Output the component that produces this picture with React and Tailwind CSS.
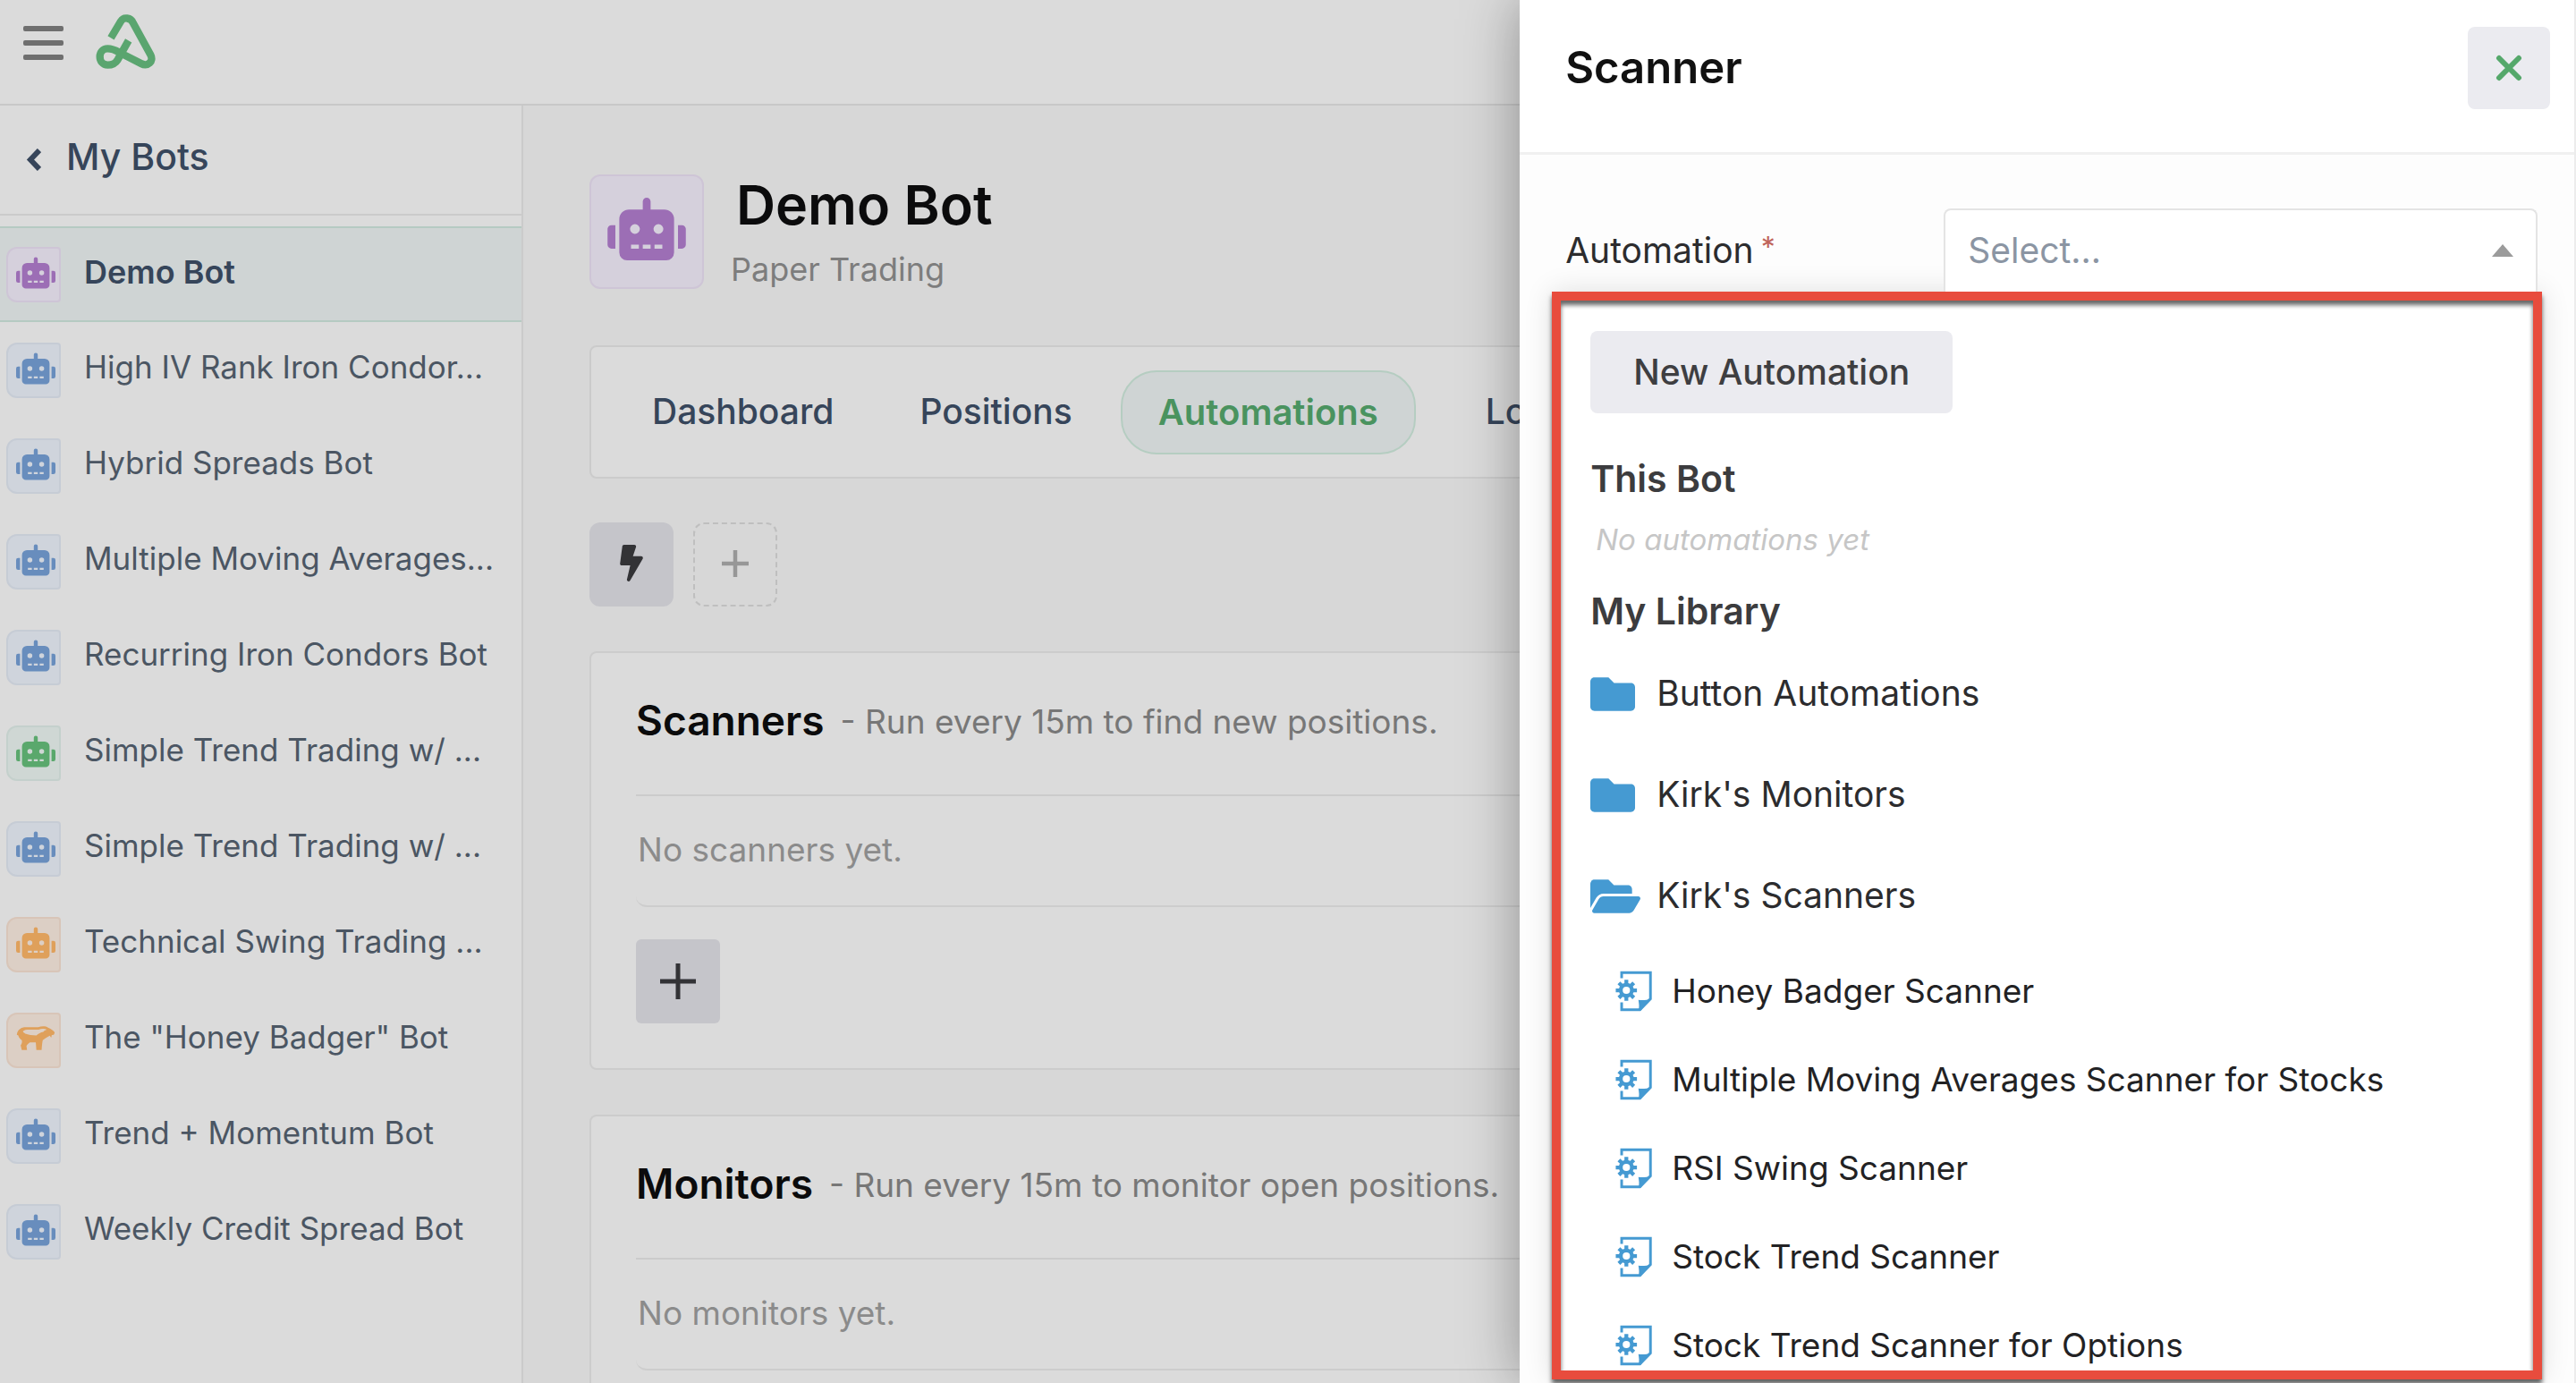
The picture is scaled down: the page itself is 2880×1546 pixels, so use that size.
import React, { useState } from 'react';
import { FaBolt, FaFolder, FaFolderOpen, FaRobot } from 'react-icons/fa';

const bots = [
  { name: 'Demo Bot', tone: 'purple', active: true },
  { name: 'High IV Rank Iron Condor...', tone: 'blue' },
  { name: 'Hybrid Spreads Bot', tone: 'blue' },
  { name: 'Multiple Moving Averages...', tone: 'blue' },
  { name: 'Recurring Iron Condors Bot', tone: 'blue' },
  { name: 'Simple Trend Trading w/ ...', tone: 'green' },
  { name: 'Simple Trend Trading w/ ...', tone: 'blue' },
  { name: 'Technical Swing Trading ...', tone: 'orange' },
  { name: 'The "Honey Badger" Bot', tone: 'orange', badger: true },
  { name: 'Trend + Momentum Bot', tone: 'blue' },
  { name: 'Weekly Credit Spread Bot', tone: 'blue' },
];

const tones = {
  purple: 'bg-[#d5d0dc] border-[#cec5d6] text-[#9c6eb5]',
  blue: 'bg-[#cfd4dc] border-[#c6ccd5] text-[#688dbd]',
  green: 'bg-[#cfd7d4] border-[#c4d0cc] text-[#5aa86c]',
  orange: 'bg-[#dccfc5] border-[#d8c5b8] text-[#dfa05b]',
};

const folders = ['Button Automations', "Kirk's Monitors", "Kirk's Scanners"];

const scanners = [
  'Honey Badger Scanner',
  'Multiple Moving Averages Scanner for Stocks',
  'RSI Swing Scanner',
  'Stock Trend Scanner',
  'Stock Trend Scanner for Options',
];

const Logo = () => (
  <svg viewBox="22 20 204 186" className="w-[68px] h-[62px]" fill="none" stroke="#5aa56f" strokeWidth="25" aria-hidden="true">
    <path d="M132 108 L96 172 C86 188 76 190 62 190 C46 190 36 177 36 162 C36 147 46 135 62 135 C78 135 88 140 100 147 L174 185 C196 197 218 178 206 156 L148 50 C140 30 115 28 106 44 L73 99" />
  </svg>
);

const BadgerIcon = () => (
  <svg viewBox="0 0 132 86" className="w-11 h-7" aria-hidden="true">
    <path
      fill="currentColor"
      d="M12 10 C18 4 28 3 40 4 L74 4 C86 0 100 0 108 5 C120 10 128 16 131 22 L128 30 L121 31 L119 40 L114 33 C106 37 98 42 90 48 C88 56 87 70 86 82 L68 82 L66 56 L46 56 C40 60 36 64 34 68 L36 82 L18 82 L14 66 C18 60 20 54 18 48 C12 44 8 40 6 32 L1 30 C2 20 6 14 12 10 Z"
    />
    <path
      fill="#dccfc5"
      d="M22 18 C26 13 34 12 44 12 L76 12 C86 8 96 8 104 12 C98 14 94 16 92 20 C82 22 76 26 68 32 C54 32 40 30 30 26 C26 24 22 22 22 18 Z"
    />
  </svg>
);

const ScannerIcon = () => (
  <svg viewBox="110 376 124 140" className="w-[41px] h-[46px]" aria-hidden="true">
    <path d="M131 402 V383 H229 V472 L193 509 H131 V484" fill="none" stroke="#459ad2" strokeWidth="9" />
    <path d="M188 511 C192 500 190 490 188 476 C204 478 218 476 231 470 L196 512 Z" fill="#459ad2" />
    <g stroke="#459ad2" strokeWidth="13">
      {[0, 45, 90, 135].map((a) => (
        <path key={a} d="M147 407 V425 M147 461 V479" transform={`rotate(${a} 147 443)`} />
      ))}
      <circle cx="147" cy="443" r="19" fill="none" />
    </g>
  </svg>
);

const Plus = ({ size, className }) => (
  <svg viewBox="0 0 40 40" className={`${size} ${className}`} stroke="currentColor" aria-hidden="true">
    <path d="M20 0 V40 M0 20 H40" />
  </svg>
);

const SectionCard = ({ title, hint, empty }) => (
  <section className="bg-[#dbdbdb] border-2 border-[#cccccc] rounded-lg pl-[50px] pb-[50px]">
    <div className="h-[160px] flex items-center pb-2 border-b-2 border-[#cbcbcb]">
      <h2 className="text-[46px] leading-[60px] font-semibold text-[#0b0b0c]">{title}</h2>
      <p className="text-[37px] leading-[60px] text-[#777777] ml-[18px] pt-1">- {hint}</p>
    </div>
    <div className="h-[124px] flex items-center pb-0.5 pl-0.5 border-b-2 border-[#cdcdcd] rounded-bl-xl">
      <p className="text-[37px] text-[#8b8b8b]">{empty}</p>
    </div>
    <button aria-label={`Add to ${title}`} className="mt-9 w-[94px] h-[94px] rounded-md bg-[#c5c5ca] text-[#333336] flex items-center justify-center">
      <Plus size="w-10 h-10" className="stroke-[5]" />
    </button>
  </section>
);

const App = () => {
  const [openFolder, setOpenFolder] = useState("Kirk's Scanners");

  return (
    <div className="relative h-screen overflow-hidden flex flex-col bg-[#d7d7d7] font-['Inter','Liberation_Sans',sans-serif]">
      <header className="h-[118px] shrink-0 flex items-start bg-[#dbdbdb] border-b-2 border-[#c8c8c8] pl-[26px] pt-4">
        <button aria-label="Menu" className="w-[45px] flex flex-col gap-2.5 mt-[13px]">
          <span className="h-1.5 w-full rounded-xs bg-[#6f6f6f]" />
          <span className="h-1.5 w-full rounded-xs bg-[#6f6f6f]" />
          <span className="h-1.5 w-full rounded-xs bg-[#6f6f6f]" />
        </button>
        <a href="#home" aria-label="Home" className="ml-9">
          <Logo />
        </a>
      </header>

      <div className="flex flex-1 min-h-0">
        <aside className="w-[585px] shrink-0 bg-[#dbdbdb] border-r-2 border-[#cbcbcb]">
          <a href="#bots" className="h-[123px] flex items-center border-b-2 border-[#cbcbcb] pl-[29px] text-[#36455a]">
            <svg viewBox="0 0 17 25" className="w-[17px] h-[25px]" fill="none" stroke="currentColor" strokeWidth="6" aria-hidden="true">
              <path d="M15 2 L5 12.5 L15 23" />
            </svg>
            <span className="text-[41px] font-medium ml-7 pb-1.5">My Bots</span>
          </a>
          <nav className="pt-3">
            {bots.map((bot, i) => (
              <a
                key={i}
                href="#bot"
                className={
                  bot.active
                    ? 'h-[107px] flex items-center pl-[7px] bg-[#cfd4d4] border-y-2 border-[#b5cac2] text-[#36455a]'
                    : 'h-[107px] flex items-center pl-[7px] text-[#4b5663]'
                }
              >
                <span className={`w-[61px] h-[62px] shrink-0 border-2 rounded-l-xl rounded-r-sm flex items-center justify-center pl-1 pb-1 ${tones[bot.tone]}`}>
                  {bot.badger ? <BadgerIcon /> : <FaRobot className="w-11 h-9" />}
                </span>
                <span className={bot.active ? 'text-[36px] font-semibold ml-[26px] pb-1.5' : 'text-[35px] ml-[26px] pb-1.5 whitespace-nowrap'}>
                  {bot.name}
                </span>
              </a>
            ))}
          </nav>
        </aside>

        <main className="flex-1 min-w-0 pl-[74px] pr-[74px] pt-[77px]">
          <div className="flex">
            <div className="w-32 h-32 rounded-xl border-2 bg-[#d5d0dc] border-[#cec5d6] text-[#9c6eb5] flex items-center justify-center pb-1.5">
              <FaRobot className="w-[88px] h-[70px]" />
            </div>
            <div className="ml-[30px]">
              <h1 className="text-[61px] leading-[68px] font-semibold text-[#0b0b0c] pl-1.5">Demo Bot</h1>
              <p className="text-[36px] leading-[76px] text-[#7d7d7d]">Paper Trading</p>
            </div>
          </div>

          <nav className="mt-[47px] h-[149px] flex items-center gap-3 bg-[#dbdbdb] border-2 border-[#cbcbcb] rounded-lg pl-[26px] text-[39px] font-medium text-[#36455a]">
            <button className="h-[94px] px-10 border-2 border-transparent">Dashboard</button>
            <button className="h-[94px] px-10 border-2 border-transparent">Positions</button>
            <button className="h-[94px] px-10 border-2 border-[#b5cdc1] bg-[#cfd4d4] rounded-[40px] text-[40px] font-semibold text-[#4a935f]">Automations</button>
            <button className="h-[94px] px-10 border-2 border-transparent ml-6">Logs</button>
          </nav>

          <div className="mt-[49px] flex gap-[22px]">
            <button aria-label="Triggers" className="w-[94px] h-[94px] rounded-xl bg-[#c5c5ca] text-[#333336] flex items-center justify-center pb-1">
              <FaBolt className="w-[26px] h-[41px]" />
            </button>
            <button aria-label="Add group" className="w-[94px] h-[94px] rounded-xl border-2 border-dashed border-[#bfbfbf] text-[#979797] flex items-center justify-center pb-0.5">
              <Plus size="w-[30px] h-[30px]" className="stroke-[6]" />
            </button>
          </div>

          <div className="mt-[50px] flex flex-col gap-[50px]">
            <SectionCard title="Scanners" hint="Run every 15m to find new positions." empty="No scanners yet." />
            <SectionCard title="Monitors" hint="Run every 15m to monitor open positions." empty="No monitors yet." />
          </div>
        </main>
      </div>

      {/* Drawer slides in over the bot page */}
      <aside className="absolute inset-y-0 right-0 w-[41%] flex flex-col bg-[#fdfdfd] border-r-2 border-[#ececec] shadow-[0_0_60px_rgba(0,0,0,0.35)]">
        <header className="h-[173px] shrink-0 flex items-start justify-between bg-white border-b-3 border-[#f0f0f0] pl-[51px] pr-[27px] pt-[30px]">
          <h2 className="text-[49px] leading-[92px] font-semibold text-[#111111]">Scanner</h2>
          <button aria-label="Close" className="w-[92px] h-[92px] rounded-lg bg-[#ebebf0] flex items-center justify-center">
            <svg viewBox="0 0 30 30" className="w-[30px] h-[30px]" stroke="#55a86b" strokeWidth="6" strokeLinecap="round" aria-hidden="true">
              <path d="M4 4 L26 26 M26 4 L4 26" />
            </svg>
          </button>
        </header>

        <div className="pt-[60px] pl-[51px] pr-[41px] flex shrink-0">
          <label htmlFor="automation" className="w-[423px] text-[39px] leading-[93px] text-[#2c2c2e] flex">
            Automation
            <span className="text-[32px] leading-[88px] text-[#c0645a] ml-2">*</span>
          </label>
          <div className="relative flex-1">
            <select id="automation" className="appearance-none w-full h-[93px] bg-white border-2 border-b-0 border-[#e4e4e4] rounded-t-lg pl-[25px] text-[39px] text-[#8b95a3]">
              <option>Select...</option>
            </select>
            <svg viewBox="0 0 24 14" className="absolute right-[27px] top-10 w-6 h-3.5 pointer-events-none" fill="#9b9b9b" aria-hidden="true">
              <path d="M12 0 L24 14 H0 Z" />
            </svg>
          </div>
        </div>

        <div className="ml-9 mr-9 mb-1 flex-1 min-h-0 overflow-hidden bg-white border-10 border-[#e84c3d] px-[33px] pt-[34px] shadow-[0_5px_5px_rgba(0,0,0,0.6),0_0_30px_rgba(0,0,0,0.12),inset_0_5px_5px_rgba(0,0,0,0.6)]">
          <button className="h-[92px] px-12 rounded-lg bg-[#ebebf0] text-[39px] font-medium text-[#3e3e41]">New Automation</button>

          <h3 className="mt-[43px] text-[41px] leading-[60px] font-semibold text-[#3c3c3e]">This Bot</h3>
          <p className="text-[33px] leading-[76px] italic text-[#c6c6c6] pl-1.5">No automations yet</p>

          <h3 className="mt-3 text-[41px] leading-[60px] font-semibold text-[#3c3c3e]">My Library</h3>
          <ul className="mt-1.5">
            {folders.map((name) => (
              <li key={name}>
                <button onClick={() => setOpenFolder(name)} className="h-[113px] flex items-center text-[39px] text-[#2c2c2e]">
                  <span className="w-[74px] text-[#459ad2]">
                    {name === openFolder ? <FaFolderOpen className="w-14 h-[50px]" /> : <FaFolder className="w-[50px] h-[50px]" />}
                  </span>
                  {name}
                </button>
              </li>
            ))}
          </ul>
          <ul>
            {scanners.map((name) => (
              <li key={name}>
                <button className="h-[99px] flex items-center gap-[22px] pl-7 text-[37px] text-[#222224] whitespace-nowrap">
                  <ScannerIcon />
                  {name}
                </button>
              </li>
            ))}
          </ul>
        </div>
      </aside>
    </div>
  );
};

export default App;
